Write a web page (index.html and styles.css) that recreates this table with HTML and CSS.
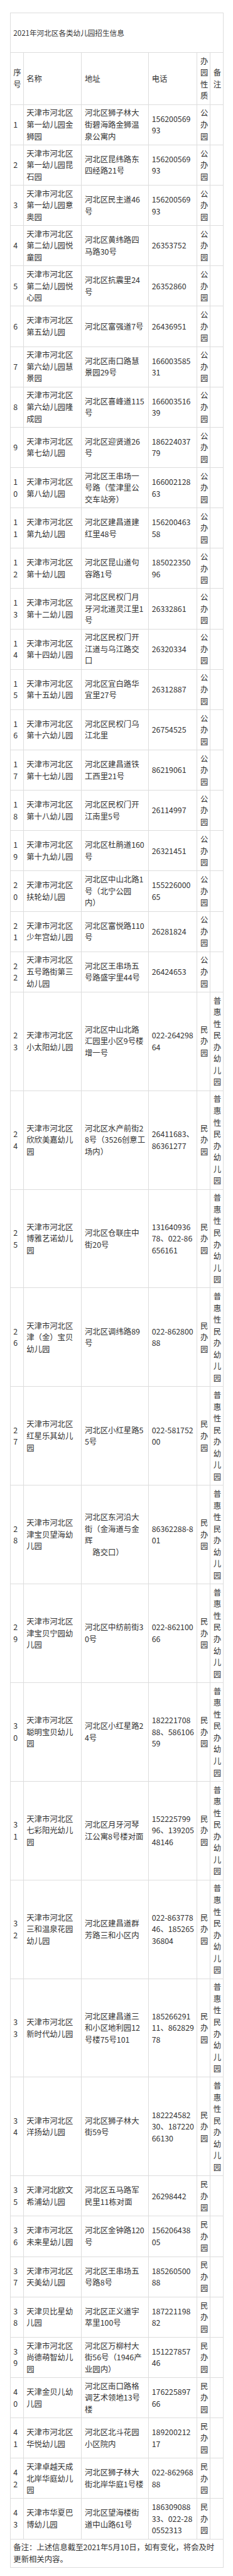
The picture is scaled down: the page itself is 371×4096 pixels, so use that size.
FILE: index.html
```html
<!DOCTYPE html>
<html lang="zh-CN">
<head>
<meta charset="utf-8">
<title>2021年河北区各类幼儿园招生信息</title>
<link rel="stylesheet" href="styles.css">
</head>
<body>
<table class="info">
<colgroup>
<col class="c-no"><col class="c-name"><col class="c-addr"><col class="c-tel"><col class="c-type"><col class="c-note">
</colgroup>
<tbody>
<tr class="title"><td colspan="6">2021年河北区各类幼儿园招生信息</td></tr>
<tr><td>序<br>号</td><td>名称</td><td>地址</td><td>电话</td><td>办<br>园<br>性<br>质</td><td>备<br>注</td></tr>

<tr><td>1</td><td>天津市河北区<br>第一幼儿园金<br>狮园</td><td>河北区狮子林大<br>街碧海路金狮温<br>泉公寓内</td><td>156200569<br>93</td><td>公<br>办<br>园</td><td></td></tr>
<tr><td>2</td><td>天津市河北区<br>第一幼儿园昆<br>石园</td><td>河北区昆纬路东<br>四经路21号</td><td>156200569<br>93</td><td>公<br>办<br>园</td><td></td></tr>
<tr><td>3</td><td>天津市河北区<br>第一幼儿园意<br>奥园</td><td>河北区民主道46<br>号</td><td>156200569<br>93</td><td>公<br>办<br>园</td><td></td></tr>
<tr><td>4</td><td>天津市河北区<br>第二幼儿园悦<br>童园</td><td>河北区黄纬路四<br>马路30号</td><td>26353752</td><td>公<br>办<br>园</td><td></td></tr>
<tr><td>5</td><td>天津市河北区<br>第二幼儿园悦<br>心园</td><td>河北区抗震里24<br>号</td><td>26352860</td><td>公<br>办<br>园</td><td></td></tr>
<tr><td>6</td><td>天津市河北区<br>第五幼儿园</td><td>河北区富强道7号</td><td>26436951</td><td>公<br>办<br>园</td><td></td></tr>
<tr><td>7</td><td>天津市河北区<br>第六幼儿园慧<br>景园</td><td>河北区南口路慧<br>景园29号</td><td>166003585<br>31</td><td>公<br>办<br>园</td><td></td></tr>
<tr><td>8</td><td>天津市河北区<br>第六幼儿园隆<br>成园</td><td>河北区喜峰道115<br>号</td><td>166003516<br>39</td><td>公<br>办<br>园</td><td></td></tr>
<tr><td>9</td><td>天津市河北区<br>第七幼儿园</td><td>河北区迎贤道26<br>号</td><td>186224037<br>79</td><td>公<br>办<br>园</td><td></td></tr>
<tr><td>1<br>0</td><td>天津市河北区<br>第八幼儿园</td><td>河北区王串场一<br>号路（莹津里公<br>交车站旁）</td><td>166002128<br>63</td><td>公<br>办<br>园</td><td></td></tr>
<tr><td>1<br>1</td><td>天津市河北区<br>第九幼儿园</td><td>河北区建昌道建<br>红里48号</td><td>156200463<br>58</td><td>公<br>办<br>园</td><td></td></tr>
<tr><td>1<br>2</td><td>天津市河北区<br>第十幼儿园</td><td>河北区昆山道句<br>容路1号</td><td>185022350<br>96</td><td>公<br>办<br>园</td><td></td></tr>
<tr><td>1<br>3</td><td>天津市河北区<br>第十二幼儿园</td><td>河北区民权门月<br>牙河北道灵江里1<br>号</td><td>26332861</td><td>公<br>办<br>园</td><td></td></tr>
<tr><td>1<br>4</td><td>天津市河北区<br>第十四幼儿园</td><td>河北区民权门开<br>江道与乌江路交<br>口</td><td>26320334</td><td>公<br>办<br>园</td><td></td></tr>
<tr><td>1<br>5</td><td>天津市河北区<br>第十五幼儿园</td><td>河北区宜白路华<br>宜里27号</td><td>26312887</td><td>公<br>办<br>园</td><td></td></tr>
<tr><td>1<br>6</td><td>天津市河北区<br>第十六幼儿园</td><td>河北区民权门乌<br>江北里</td><td>26754525</td><td>公<br>办<br>园</td><td></td></tr>
<tr><td>1<br>7</td><td>天津市河北区<br>第十七幼儿园</td><td>河北区建昌道铁<br>工西里21号</td><td>86219061</td><td>公<br>办<br>园</td><td></td></tr>
<tr><td>1<br>8</td><td>天津市河北区<br>第十八幼儿园</td><td>河北区民权门开<br>江南里5号</td><td>26114997</td><td>公<br>办<br>园</td><td></td></tr>
<tr><td>1<br>9</td><td>天津市河北区<br>第十九幼儿园</td><td>河北区杜鹃道160<br>号</td><td>26321451</td><td>公<br>办<br>园</td><td></td></tr>
<tr><td>2<br>0</td><td>天津市河北区<br>扶轮幼儿园</td><td>河北区中山北路1<br>号（北宁公园<br>内）</td><td>155226000<br>65</td><td>公<br>办<br>园</td><td></td></tr>
<tr><td>2<br>1</td><td>天津市河北区<br>少年宫幼儿园</td><td>河北区富悦路110<br>号</td><td>26281824</td><td>公<br>办<br>园</td><td></td></tr>
<tr><td>2<br>2</td><td>天津市河北区<br>五号路街第三<br>幼儿园</td><td>河北区王串场五<br>号路盛宇里44号</td><td>26424653</td><td>公<br>办<br>园</td><td></td></tr>

<tr><td>2<br>3</td><td>天津市河北区<br>小太阳幼儿园</td><td>河北区中山北路<br>汇园里小区9号楼<br>增一号</td><td>022-264298<br>64</td><td>民<br>办<br>园</td><td>普<br>惠<br>性<br>民<br>办<br>幼<br>儿<br>园</td></tr>
<tr><td>2<br>4</td><td>天津市河北区<br>欣欣美嘉幼儿<br>园</td><td>河北区水产前街2<br>8号（3526创意工<br>场内）</td><td>26411683、<br>86361277</td><td>民<br>办<br>园</td><td>普<br>惠<br>性<br>民<br>办<br>幼<br>儿<br>园</td></tr>
<tr><td>2<br>5</td><td>天津市河北区<br>博雅艺诺幼儿<br>园</td><td>河北区仓联庄中<br>街20号</td><td>131640936<br>78、022-86<br>656161</td><td>民<br>办<br>园</td><td>普<br>惠<br>性<br>民<br>办<br>幼<br>儿<br>园</td></tr>
<tr><td>2<br>6</td><td>天津市河北区<br>津（金）宝贝<br>幼儿园</td><td>河北区调纬路89<br>号</td><td>022-862800<br>88</td><td>民<br>办<br>园</td><td>普<br>惠<br>性<br>民<br>办<br>幼<br>儿<br>园</td></tr>
<tr><td>2<br>7</td><td>天津市河北区<br>红星乐其幼儿<br>园</td><td>河北区小红星路5<br>5号</td><td>022-581752<br>00</td><td>民<br>办<br>园</td><td>普<br>惠<br>性<br>民<br>办<br>幼<br>儿<br>园</td></tr>
<tr><td>2<br>8</td><td>天津市河北区<br>津宝贝望海幼<br>儿园</td><td>河北区东河沿大<br>街（金海道与金<br>辉<br>　路交口）</td><td>86362288-8<br>01</td><td>民<br>办<br>园</td><td>普<br>惠<br>性<br>民<br>办<br>幼<br>儿<br>园</td></tr>
<tr><td>2<br>9</td><td>天津市河北区<br>津宝贝宁园幼<br>儿园</td><td>河北区中纺前街3<br>0号</td><td>022-862100<br>66</td><td>民<br>办<br>园</td><td>普<br>惠<br>性<br>民<br>办<br>幼<br>儿<br>园</td></tr>
<tr><td>3<br>0</td><td>天津市河北区<br>聪明宝贝幼儿<br>园</td><td>河北区小红星路2<br>4号</td><td>182221708<br>88、586106<br>59</td><td>民<br>办<br>园</td><td>普<br>惠<br>性<br>民<br>办<br>幼<br>儿<br>园</td></tr>
<tr><td>3<br>1</td><td>天津市河北区<br>七彩阳光幼儿<br>园</td><td>河北区月牙河琴<br>江公寓8号楼对面</td><td>152225799<br>96、139205<br>48146</td><td>民<br>办<br>园</td><td>普<br>惠<br>性<br>民<br>办<br>幼<br>儿<br>园</td></tr>
<tr><td>3<br>2</td><td>天津市河北区<br>三和温泉花园<br>幼儿园</td><td>河北区建昌道群<br>芳路三和小区内</td><td>022-863778<br>46、185265<br>36804</td><td>民<br>办<br>园</td><td>普<br>惠<br>性<br>民<br>办<br>幼<br>儿<br>园</td></tr>
<tr><td>3<br>3</td><td>天津市河北区<br>新时代幼儿园</td><td>河北区建昌道三<br>和小区地利园12<br>号楼75号101</td><td>185266291<br>11、862829<br>78</td><td>民<br>办<br>园</td><td>普<br>惠<br>性<br>民<br>办<br>幼<br>儿<br>园</td></tr>
<tr><td>3<br>4</td><td>天津市河北区<br>洋扬幼儿园</td><td>河北区狮子林大<br>街59号</td><td>182224582<br>30、187220<br>66130</td><td>民<br>办<br>园</td><td>普<br>惠<br>性<br>民<br>办<br>幼<br>儿<br>园</td></tr>

<tr><td>3<br>5</td><td>天津河北欧文<br>希浦幼儿园</td><td>河北区五马路军<br>民里11栋对面</td><td>26298442</td><td>民<br>办<br>园</td><td></td></tr>
<tr><td>3<br>6</td><td>天津市河北区<br>未来星幼儿园</td><td>河北区金钟路120<br>号</td><td>156206438<br>05</td><td>民<br>办<br>园</td><td></td></tr>
<tr><td>3<br>7</td><td>天津市河北区<br>天美幼儿园</td><td>河北区王串场五<br>号路8号</td><td>185260500<br>88</td><td>民<br>办<br>园</td><td></td></tr>
<tr><td>3<br>8</td><td>天津贝比星幼<br>儿园</td><td>河北区正义道宇<br>萃里100号</td><td>187221198<br>82</td><td>民<br>办<br>园</td><td></td></tr>
<tr><td>3<br>9</td><td>天津市河北区<br>尚德萌智幼儿<br>园</td><td>河北区万柳村大<br>街56号（1946产<br>业园内）</td><td>151227857<br>46</td><td>民<br>办<br>园</td><td></td></tr>
<tr><td>4<br>0</td><td>天津金贝儿幼<br>儿园</td><td>河北区南口路格<br>调艺术领地13号<br>楼</td><td>176225897<br>66</td><td>民<br>办<br>园</td><td></td></tr>
<tr><td>4<br>1</td><td>天津市河北区<br>华悦幼儿园</td><td>河北区北斗花园<br>小区院内</td><td>189200212<br>17</td><td>民<br>办<br>园</td><td></td></tr>
<tr><td>4<br>2</td><td>天津卓越天成<br>北岸华庭幼儿<br>园</td><td>河北区狮子林大<br>街北岸华庭1号楼</td><td>022-862968<br>88</td><td>民<br>办<br>园</td><td></td></tr>
<tr><td>4<br>3</td><td>天津市华夏巴<br>博幼儿园</td><td>河北区望海楼街<br>道中山路61号</td><td>186309088<br>33、022-28<br>0552313</td><td>民<br>办<br>园</td><td></td></tr>

<tr class="foot"><td colspan="6">备注：上述信息截至2021年5月10日，如有变化，将会及时<br>更新相关内容。</td></tr>
</tbody>
</table>
</body>
</html>
```

FILE: styles.css
```css
html, body {
  margin: 0;
  background: #ffffff;
}

body {
  padding: 19.5px 0 0 15.7px;
  font-family: "Noto Sans CJK SC", "Noto Sans", sans-serif;
  color: #333333;
}

.info {
  border-collapse: collapse;
  table-layout: fixed;
  width: 339.5px;
  font-size: 12.37px;
  line-height: 18.55px;
}

.c-no { width: 20.9px; }
.c-name { width: 92.8px; }
.c-addr { width: 106.7px; }
.c-tel { width: 77.3px; }
.c-type { width: 20.9px; }
.c-note { width: 20.9px; }

.info td {
  border: 1px solid #dddddd;
  padding: 3.75px 4.6px;
  vertical-align: middle;
  text-align: left;
  white-space: nowrap;
}

.title td {
  font-size: 11.6px;
  padding: 22px 4.6px;
}
```
